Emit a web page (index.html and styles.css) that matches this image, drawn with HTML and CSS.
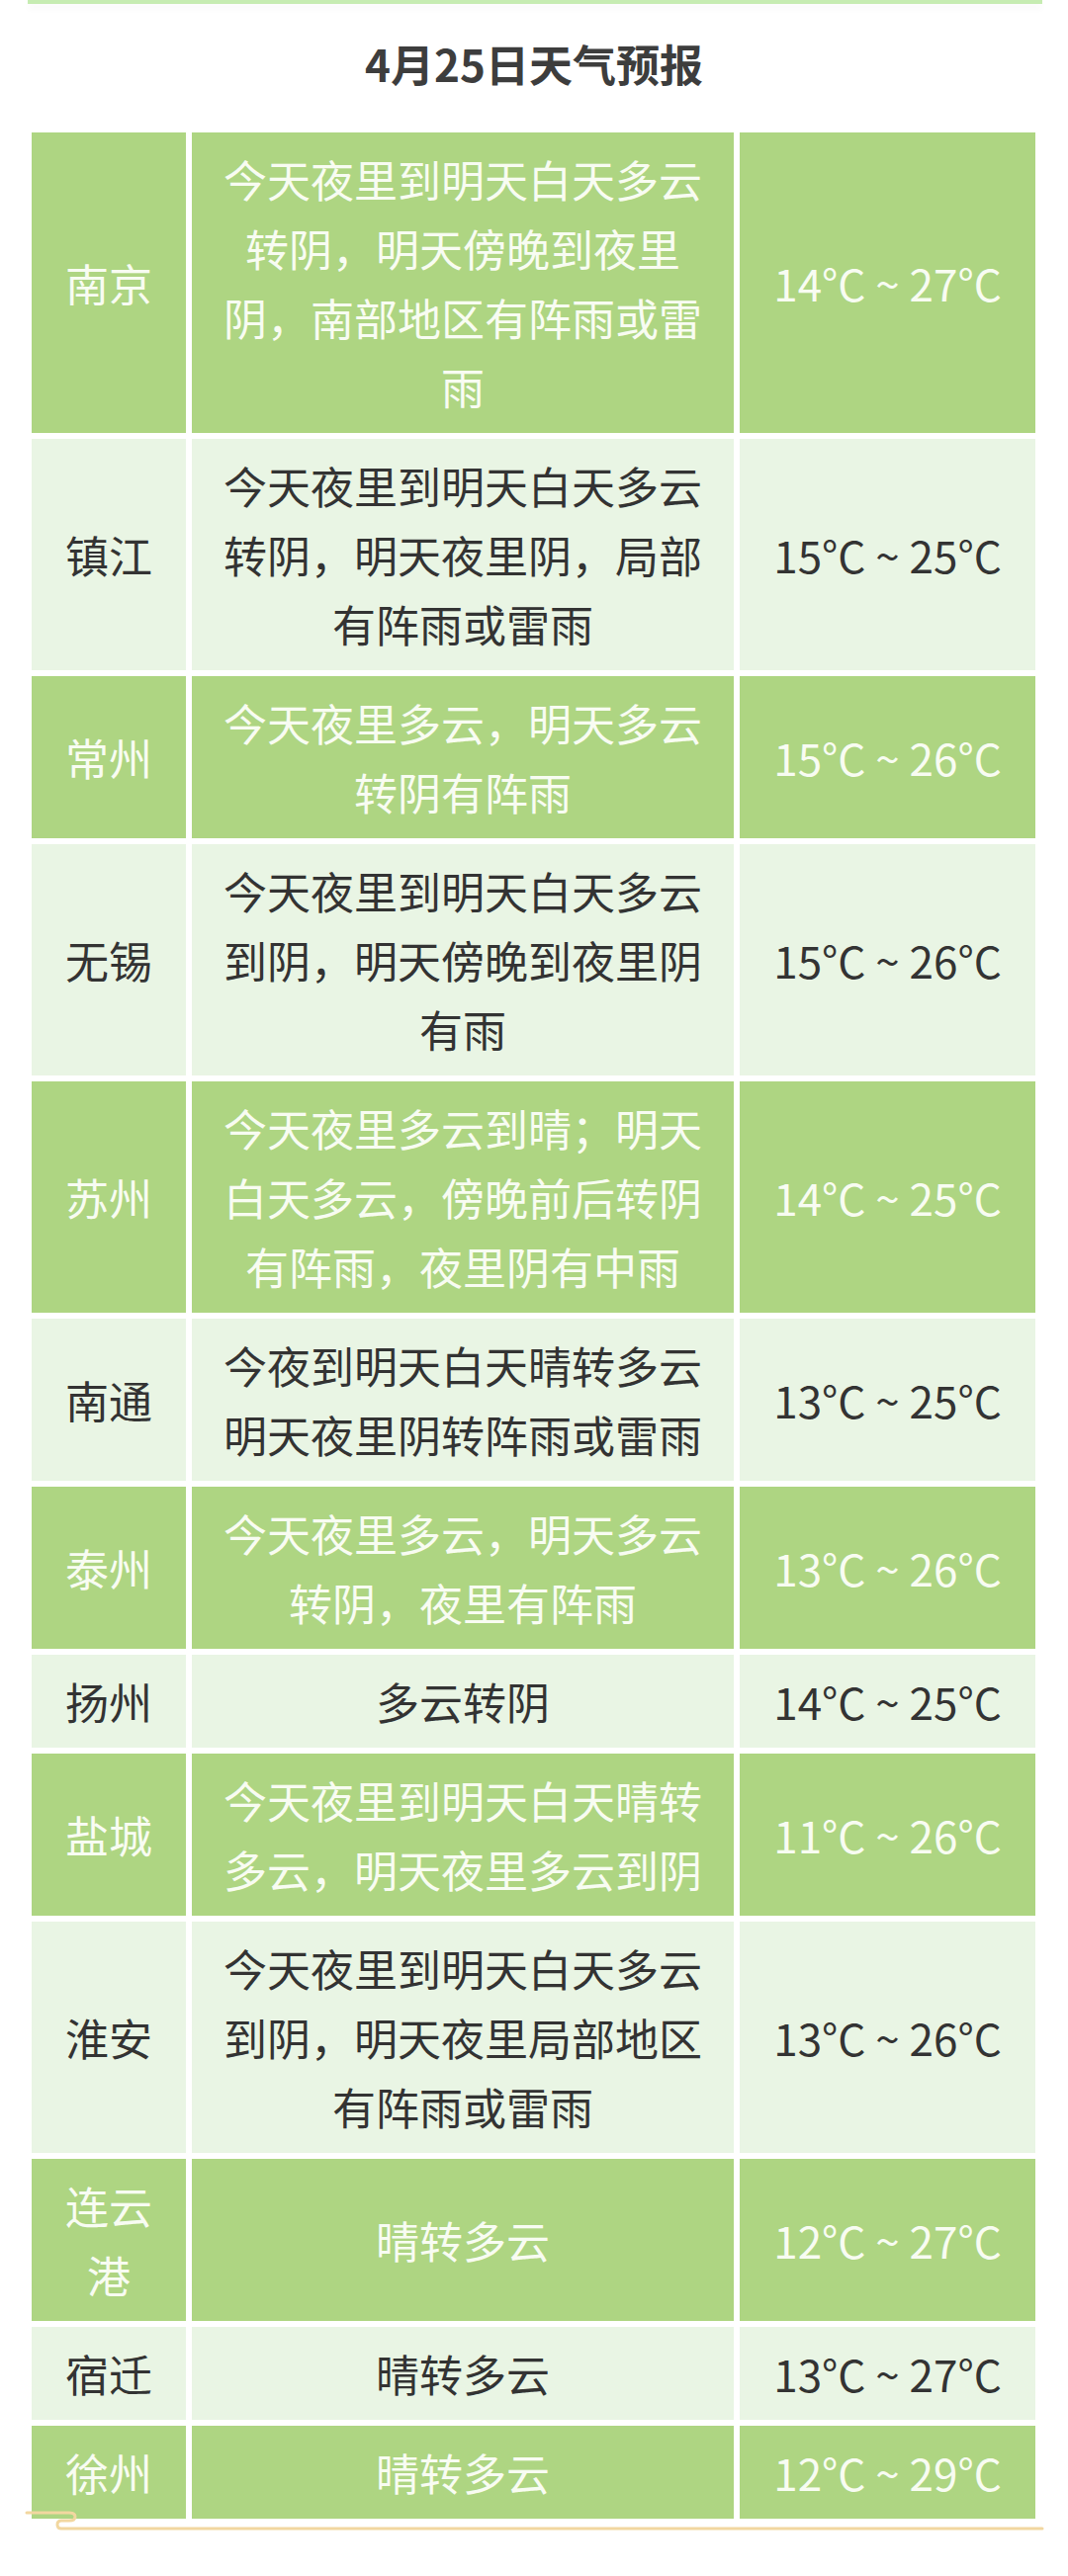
FILE: index.html
```html
<!DOCTYPE html>
<html lang="zh-CN">
<head>
<meta charset="utf-8">
<title>4月25日天气预报</title>
<link rel="stylesheet" href="styles.css">
</head>
<body>
<div class="page">
  <div class="topbar"></div>
  <h1 class="title">4月25日天气预报</h1>
  <div class="table-wrap">
    <div class="table">
      <div class="row dark"><div class="cell">南京</div><div class="cell">今天夜里到明天白天多云转阴，明天傍晚到夜里阴，南部地区有阵雨或雷雨</div><div class="cell">14°C ~ 27°C</div></div>
      <div class="row light"><div class="cell">镇江</div><div class="cell">今天夜里到明天白天多云转阴，明天夜里阴，局部有阵雨或雷雨</div><div class="cell">15°C ~ 25°C</div></div>
      <div class="row dark"><div class="cell">常州</div><div class="cell">今天夜里多云，明天多云转阴有阵雨</div><div class="cell">15°C ~ 26°C</div></div>
      <div class="row light"><div class="cell">无锡</div><div class="cell">今天夜里到明天白天多云到阴，明天傍晚到夜里阴有雨</div><div class="cell">15°C ~ 26°C</div></div>
      <div class="row dark"><div class="cell">苏州</div><div class="cell">今天夜里多云到晴；明天白天多云，傍晚前后转阴有阵雨，夜里阴有中雨</div><div class="cell">14°C ~ 25°C</div></div>
      <div class="row light"><div class="cell">南通</div><div class="cell">今夜到明天白天晴转多云明天夜里阴转阵雨或雷雨</div><div class="cell">13°C ~ 25°C</div></div>
      <div class="row dark"><div class="cell">泰州</div><div class="cell">今天夜里多云，明天多云转阴，夜里有阵雨</div><div class="cell">13°C ~ 26°C</div></div>
      <div class="row light"><div class="cell">扬州</div><div class="cell">多云转阴</div><div class="cell">14°C ~ 25°C</div></div>
      <div class="row dark"><div class="cell">盐城</div><div class="cell">今天夜里到明天白天晴转多云，明天夜里多云到阴</div><div class="cell">11°C ~ 26°C</div></div>
      <div class="row light"><div class="cell">淮安</div><div class="cell">今天夜里到明天白天多云到阴，明天夜里局部地区有阵雨或雷雨</div><div class="cell">13°C ~ 26°C</div></div>
      <div class="row dark"><div class="cell">连云港</div><div class="cell">晴转多云</div><div class="cell">12°C ~ 27°C</div></div>
      <div class="row light"><div class="cell">宿迁</div><div class="cell">晴转多云</div><div class="cell">13°C ~ 27°C</div></div>
      <div class="row dark"><div class="cell">徐州</div><div class="cell">晴转多云</div><div class="cell">12°C ~ 29°C</div></div>
    </div>
    <svg class="deco" width="1040" height="28" viewBox="0 0 1040 28" aria-hidden="true">
      <path d="M7,7 H50 Q56,7 56,11 Q56,15 50,15 H42 Q38,15 38,19 Q38,23 42,23 H1034" fill="none" stroke="#f2d7a0" stroke-width="3" stroke-linecap="round"/>
    </svg>
  </div>
</div>
</body>
</html>
```
FILE: styles.css
```css
html, body {
  margin: 0;
  padding: 0;
  background: #ffffff;
}

body {
  font-family: "Noto Sans CJK SC", "Noto Sans", sans-serif;
  width: 1080px;
}

.page {
  display: flex;
  flex-direction: column;
  min-height: 2606px;
}

.topbar {
  margin-left: 28px;
  width: 1026px;
  height: 4px;
  background: #c6ecb2;
  box-shadow: 0 5px 6px rgba(0, 0, 0, 0.035);
}

.title {
  margin: 25px 0 35px 0;
  font-size: 44px;
  line-height: 70px;
  font-weight: 700;
  color: #3d3d3d;
  text-align: center;
}

.table-wrap {
  position: relative;
  margin-left: 32px;
  width: 1015px;
}

.table {
  display: flex;
  flex-direction: column;
  gap: 6px;
}

.row {
  display: grid;
  grid-template-columns: 156px 548px 299px;
  column-gap: 6px;
}

.cell {
  display: flex;
  align-items: center;
  justify-content: center;
  text-align: center;
  padding: 12px 20px;
  font-size: 44px;
  line-height: 70px;
  font-weight: 400;
}

.dark .cell {
  background: #aed582;
  color: #f8fcf2;
}

.light .cell {
  background: #e9f5e4;
  color: #333333;
}

.deco {
  position: absolute;
  left: -12px;
  bottom: -15px;
}
```
